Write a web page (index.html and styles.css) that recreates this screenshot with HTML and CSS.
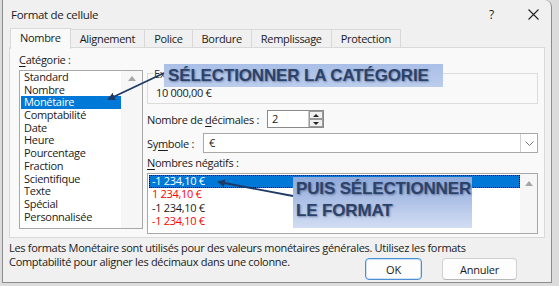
FILE: index.html
```html
<!DOCTYPE html>
<html lang="fr">
<head>
    <meta charset="UTF-8">
    <title>Format de cellule</title>
    <link rel="stylesheet" href="styles.css">
</head>
<body>
    <div class="dialog">
        <div class="titlebar">
            <span class="title">Format de cellule</span>
            <span class="help">?</span>
            <svg class="close" width="11" height="11" viewBox="0 0 11 11">
                <path d="M0.5 0.5 L10.5 10.5 M10.5 0.5 L0.5 10.5" stroke="#222" stroke-width="1.1" fill="none"/>
            </svg>
        </div>

        <div class="tabs">
            <div class="tab active">Nombre</div>
            <div class="tab">Alignement</div>
            <div class="tab">Police</div>
            <div class="tab">Bordure</div>
            <div class="tab">Remplissage</div>
            <div class="tab">Protection</div>
        </div>

        <div class="panel">
            <div class="cat-col">
                <div class="label"><u>C</u>atégorie :</div>
                <div class="listbox cat-list">
                    <ul class="items">
                        <li>Standard</li>
                        <li>Nombre</li>
                        <li class="selected">Monétaire</li>
                        <li>Comptabilité</li>
                        <li>Date</li>
                        <li>Heure</li>
                        <li>Pourcentage</li>
                        <li>Fraction</li>
                        <li>Scientifique</li>
                        <li>Texte</li>
                        <li>Spécial</li>
                        <li>Personnalisée</li>
                    </ul>
                    <div class="vscroll"><span class="up"></span></div>
                </div>
            </div>

            <div class="opts-col">
                <div class="sample">
                    <span class="sample-legend">Exemple</span>
                    <div class="sample-value">10 000,00 €</div>
                </div>

                <div class="row decimals">
                    <span>Nombre de <u>d</u>écimales :</span>
                    <div class="spin">
                        <span class="spin-value">2</span>
                        <div class="spin-btns">
                            <span class="spin-btn"><i class="tri-up"></i></span>
                            <span class="spin-btn"><i class="tri-down"></i></span>
                        </div>
                    </div>
                </div>

                <div class="row symbol">
                    <span>Sy<u>m</u>bole :</span>
                    <div class="combo">
                        <span class="combo-value">€</span>
                        <span class="combo-drop">
                            <svg width="9" height="5" viewBox="0 0 9 5"><path d="M0.5 0.5 L4.5 4.5 L8.5 0.5" stroke="#777" fill="none"/></svg>
                        </span>
                    </div>
                </div>

                <div class="label neg-label"><u>N</u>ombres négatifs :</div>
                <div class="listbox neg-list">
                    <ul class="items">
                        <li class="selected focus">-1 234,10 €</li>
                        <li class="red">1 234,10 €</li>
                        <li>-1 234,10 €</li>
                        <li class="red">-1 234,10 €</li>
                    </ul>
                    <div class="vscroll"><span class="up"></span></div>
                </div>
            </div>
        </div>

        <div class="footer">
            <div class="desc">
                <span class="desc-line">Les formats Monétaire sont utilisés pour des valeurs monétaires générales. Utilisez les formats</span>
                <span class="desc-line">Comptabilité pour aligner les décimaux dans une colonne.</span>
            </div>
            <div class="buttons">
                <button class="btn default">OK</button>
                <button class="btn">Annuler</button>
            </div>
        </div>

        <!-- annotations drawn over the dialog -->
        <svg class="arrows" width="559" height="286" viewBox="0 0 559 286">
            <defs>
                <marker id="head" markerWidth="8" markerHeight="8" refX="6" refY="4" orient="auto" markerUnits="userSpaceOnUse">
                    <path d="M0 0 L8 4 L0 8 Z" fill="#1f3a64"/>
                </marker>
            </defs>
            <line x1="163" y1="73" x2="108" y2="99" stroke="#1f3a64" stroke-width="1.8" marker-end="url(#head)"/>
            <line x1="292" y1="196" x2="218" y2="182" stroke="#1f3a64" stroke-width="1.8" marker-end="url(#head)"/>
        </svg>
        <div class="callout callout-cat">SÉLECTIONNER LA CATÉGORIE</div>
        <div class="callout callout-fmt">PUIS SÉLECTIONNER<br>LE FORMAT</div>
    </div>
</body>
</html>
```

FILE: styles.css
```css
body {
    margin: 0;
    background: #dcdcdc;
    font-family: "Open Sans", "Noto Sans", sans-serif;
    font-size: 11px;
    letter-spacing: -0.3px;
    color: #1a1a1a;
    width: 559px;
    height: 286px;
    overflow: hidden;
}
u {
    text-decoration-thickness: 1px;
    text-underline-offset: 2px;
}
.dialog {
    position: relative;
    margin-left: 2px;
    width: 550px;
    height: 283px;
    background: #f0f0f0;
    border: 1px solid #8c8c8c;
    border-top: none;
    border-top-right-radius: 7px;
    box-sizing: border-box;
    display: flex;
    flex-direction: column;
}

/* title bar */
.titlebar {
    height: 28px;
    display: flex;
    align-items: center;
    padding-left: 8px;
    box-sizing: border-box;
}
.title {
    font-size: 11.5px;
    flex: 1;
}
.help {
    font-size: 12px;
    margin-right: 34px;
}
.close {
    margin-right: 12px;
}

/* tabs */
.tabs {
    display: flex;
    height: 19px;
    margin-left: 7px;
    position: relative;
    z-index: 1;
}
.tab {
    padding: 0 9px;
    line-height: 18px;
    border: 1px solid #d9d9d9;
    border-bottom: none;
    border-left: none;
    margin-top: 1px;
    background: #f0f0f0;
}
.tab:first-child {
    border-left: 1px solid #d9d9d9;
}
.tab.active {
    background: #f9f9f9;
    margin-top: 0;
    height: 20px;
    padding: 0 9px;
}

/* main page of the tab */
.panel {
    margin-left: 6px;
    width: 536px;
    background: #f9f9f9;
    border: 1px solid #d9d9d9;
    box-sizing: border-box;
    display: flex;
    gap: 4px;
    padding: 5px 6px 3px 9px;
}
.label {
    line-height: 14px;
    height: 14px;
}
.cat-col {
    width: 124px;
}
.listbox {
    background: #fff;
    border: 1px solid #a8a8a8;
    display: flex;
    box-sizing: border-box;
}
.cat-list {
    margin-top: 3px;
    height: 159px;
}
.items {
    list-style: none;
    margin: 0;
    padding: 0 0 0 1px;
    flex: 1;
}
.items li {
    height: 12.7px;
    line-height: 12.7px;
    padding-left: 3px;
    white-space: nowrap;
}
.items li.selected {
    background: #0078d7;
    color: #fff;
}
.items li.focus {
    outline: 1px dotted #000;
    outline-offset: -1px;
}
.items li.red {
    color: #ff0000;
}
.vscroll {
    width: 21px;
    background: #f6f6f6;
    display: flex;
    justify-content: center;
    padding-top: 5px;
    box-sizing: border-box;
}
.up {
    width: 0;
    height: 0;
    border-left: 4px solid transparent;
    border-right: 4px solid transparent;
    border-bottom: 5px solid #a6a6a6;
}

.opts-col {
    flex: 1;
    display: flex;
    flex-direction: column;
}
.sample {
    margin-top: 20px;
    height: 31px;
    border: 1px solid #dcdcdc;
    box-sizing: border-box;
    position: relative;
    padding: 12px 0 0 8px;
}
.sample-legend {
    position: absolute;
    top: -8px;
    left: 5px;
    padding: 0 1px;
    background: #f9f9f9;
    color: #333;
}
.sample-value {
    line-height: 14px;
}

.row {
    display: flex;
    align-items: center;
}
.decimals {
    margin-top: 6px;
    gap: 8px;
}
.spin {
    width: 57px;
    height: 18px;
    border: 1px solid #8a8a8a;
    background: #fff;
    box-sizing: border-box;
    display: flex;
    justify-content: space-between;
}
.spin-value {
    padding-left: 4px;
    line-height: 16px;
}
.spin-btns {
    width: 14px;
    display: flex;
    flex-direction: column;
    border-left: 1px solid #c8c8c8;
}
.spin-btn {
    flex: 1;
    background: #f0f0f0;
    border: 1px solid #9a9a9a;
    display: flex;
    align-items: center;
    justify-content: center;
}
.tri-up, .tri-down {
    width: 0;
    height: 0;
    border-left: 3px solid transparent;
    border-right: 3px solid transparent;
}
.tri-up {
    border-bottom: 3px solid #222;
}
.tri-down {
    border-top: 3px solid #222;
}

.symbol {
    margin-top: 5px;
    gap: 9px;
}
.combo {
    flex: 1;
    height: 20px;
    border: 1px solid #a8a8a8;
    background: #fff;
    box-sizing: border-box;
    display: flex;
    justify-content: space-between;
}
.combo-value {
    padding-left: 5px;
    line-height: 18px;
}
.combo-drop {
    width: 16px;
    border-left: 1px solid #d0d0d0;
    display: flex;
    align-items: center;
    justify-content: center;
}
.neg-label {
    margin-top: 3px;
}
.neg-list {
    margin-top: 3px;
    height: 61px;
}
.neg-list .items {
    padding: 1px 0 0 1px;
}
.neg-list .items li {
    height: 13.3px;
    line-height: 12.5px;
}
.neg-list .vscroll {
    width: 17px;
    padding-top: 7px;
}

/* description and buttons share one grid cell */
.footer {
    flex: 1;
    display: grid;
    padding: 3px 34px 2px 6px;
}
.desc, .buttons {
    grid-area: 1 / 1;
}
.desc {
    align-self: start;
    line-height: 14px;
    color: #1a1a1a;
}
.desc-line {
    display: block;
    width: fit-content;
    white-space: nowrap;
}
.buttons {
    justify-self: end;
    align-self: end;
    display: flex;
    gap: 20px;
}
.btn {
    font-family: inherit;
    font-size: 11px;
    letter-spacing: -0.2px;
    height: 22px;
    width: 75px;
    background: #fdfdfd;
    border: 1px solid #d0d0d0;
    border-bottom-color: #b8b8b8;
    border-radius: 4px;
    color: #1a1a1a;
    padding: 0;
}
.btn.default {
    width: 57px;
    border: 1px solid #4a8fd6;
    box-shadow: inset 0 0 0 1px #cfe2f5;
}

/* annotations */
.arrows {
    position: absolute;
    left: -2px;
    top: 0;
    pointer-events: none;
    z-index: 3;
}
.callout {
    position: absolute;
    z-index: 2;
    font-family: "Liberation Sans", Arial, sans-serif;
    font-weight: bold;
    font-size: 17px;
    letter-spacing: -0.15px;
    color: #2d4268;
    text-shadow: 1px 1px 2px rgba(20, 40, 80, 0.45);
    box-sizing: border-box;
}
.callout-cat {
    left: 161px;
    top: 64px;
    width: 279px;
    height: 23px;
    line-height: 23px;
    padding-left: 4px;
    background: linear-gradient(to bottom, #a9bfe7, #bccdec);
}
.callout-fmt {
    left: 290px;
    top: 177px;
    width: 179px;
    height: 51px;
    line-height: 22px;
    padding: 1px 0 0 3px;
    background: linear-gradient(to bottom, #8ea9db, #d2ddf3);
}
```
